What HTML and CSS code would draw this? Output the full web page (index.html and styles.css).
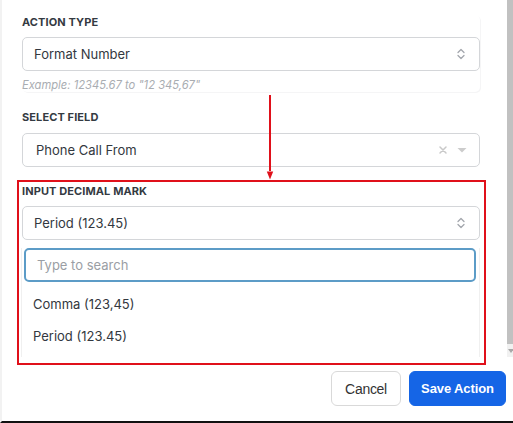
FILE: index.html
```html
<!DOCTYPE html>
<html>
<head>
<meta charset="utf-8">
<link rel="stylesheet" href="styles.css">
</head>
<body>
<div class="page">
  <div class="panel">
    <div class="field field-first">
      <div class="label">ACTION TYPE</div>
      <div class="select">
        <span class="value">Format Number</span>
        <svg class="updown" width="10" height="14" viewBox="0 0 10 14"><path d="M2 5.5 L5 2.5 L8 5.5 M2 8.5 L5 11.5 L8 8.5" fill="none" stroke="#a3a7ad" stroke-width="1.3" stroke-linecap="round" stroke-linejoin="round"/></svg>
      </div>
      <div class="hint">Example: 12345.67 to "12 345,67"</div>
    </div>
    <div class="field field-second">
      <div class="label">SELECT FIELD</div>
      <div class="select">
        <span class="value value-indent">Phone Call From</span>
        <span class="icons">
          <svg width="10" height="10" viewBox="0 0 10 10"><path d="M2 2 L8 8 M8 2 L2 8" stroke="#c9c9c9" stroke-width="1.5" stroke-linecap="round"/></svg>
          <svg width="10" height="10" viewBox="0 0 10 10"><path d="M0.5 3 L9.5 3 L5 7.5 Z" fill="#cccccc"/></svg>
        </span>
      </div>
    </div>
    <div class="field field-third">
      <div class="label">INPUT DECIMAL MARK</div>
      <div class="select">
        <span class="value">Period (123.45)</span>
        <svg class="updown" width="10" height="14" viewBox="0 0 10 14"><path d="M2 5.5 L5 2.5 L8 5.5 M2 8.5 L5 11.5 L8 8.5" fill="none" stroke="#a3a7ad" stroke-width="1.3" stroke-linecap="round" stroke-linejoin="round"/></svg>
      </div>
      <div class="menu">
        <div class="search">Type to search</div>
        <div class="option option-first">Comma (123,45)</div>
        <div class="option">Period (123.45)</div>
      </div>
    </div>
    <div class="actions">
      <button class="btn btn-cancel">Cancel</button>
      <button class="btn btn-save">Save Action</button>
    </div>
    <div class="annot-box"></div>
    <div class="annot-arrow">
      <div class="annot-line"></div>
      <svg class="annot-head" width="10" height="10" viewBox="0 0 10 10"><path d="M1 0 L9 0 L5 10 Z" fill="#e0101a"/></svg>
    </div>
  </div>
  <div class="scrollbar">
    <div class="thumb"></div>
    <div class="sb-arrow">
      <svg width="8" height="6" viewBox="0 0 8 6"><path d="M1 1 L7 1 L4 5 Z" fill="#a8a8a8"/></svg>
    </div>
  </div>
</div>
</body>
</html>
```
FILE: styles.css
```css
html, body {
  margin: 0;
  padding: 0;
  background: #ffffff;
}
body {
  width: 513px;
  height: 423px;
  overflow: hidden;
  font-family: Inter, "Noto Sans", sans-serif;
  color: #333840;
}
.page {
  display: flex;
  height: 423px;
  border-bottom: 2px solid #111111;
  border-left: 2px solid #f2f2f2;
  box-sizing: border-box;
  width: 513px;
}
.panel {
  position: relative;
  width: 501px;
  padding-left: 20px;
  display: flex;
  flex-direction: column;
}
.field {
  width: 458px;
  display: flex;
  flex-direction: column;
  border-radius: 5px;
}
.field-first {
  margin-top: 15px;
  box-shadow: 1px 1px 0 0 #f5f5f6;
}
.field-second {
  margin-top: 18px;
}
.field-third {
  margin-top: 17px;
}
.label {
  font-size: 11px;
  line-height: 14px;
  font-weight: 700;
  color: #343a42;
  letter-spacing: 0.1px;
}
.select {
  margin-top: 8px;
  height: 34px;
  border: 1px solid #d4d6d9;
  border-radius: 5px;
  box-sizing: border-box;
  display: flex;
  align-items: center;
  justify-content: space-between;
  padding: 0 13px 0 11px;
}
.field-second .select {
  margin-top: 9px;
}
.value {
  font-size: 13px;
  color: #333840;
}
.value-indent {
  padding-left: 2px;
}
.updown {
  display: block;
}
.icons {
  display: flex;
  align-items: center;
  gap: 9px;
  margin-right: -1px;
}
.icons svg {
  display: block;
}
.hint {
  margin-top: 7px;
  font-size: 11.2px;
  line-height: 14px;
  font-style: italic;
  color: #a9adb2;
}
.menu {
  margin-top: 8px;
  display: flex;
  flex-direction: column;
  border-right: 1px solid #f0f0f0;
  border-left: 1px solid #f0f0f0;
  margin-left: -1px;
  padding-bottom: 5px;
}
.search {
  margin: 0 3px 0 2px;
  height: 34px;
  border: 2px solid #5c9cc7;
  border-radius: 5px;
  box-sizing: border-box;
  display: flex;
  align-items: center;
  padding-left: 11px;
  font-size: 13px;
  color: #9a9ea4;
}
.option {
  height: 32px;
  display: flex;
  align-items: center;
  padding-left: 11px;
  font-size: 13px;
  color: #333840;
}
.option-first {
  margin-top: 6px;
}
.actions {
  margin-top: 14px;
  display: flex;
  justify-content: flex-end;
  gap: 8px;
  width: 484px;
}
.btn {
  height: 35px;
  border-radius: 6px;
  font-family: "Liberation Sans", Arial, sans-serif;
  font-size: 14px;
  box-sizing: border-box;
  padding: 0;
}
.btn-cancel {
  width: 70px;
  background: #ffffff;
  border: 1px solid #d9d9d9;
  color: #333333;
  letter-spacing: -0.3px;
}
.btn-save {
  width: 97px;
  background: #1565e6;
  border: 1px solid #1565e6;
  color: #ffffff;
  font-weight: 700;
  font-size: 13px;
  letter-spacing: -0.1px;
}
.annot-box {
  position: absolute;
  left: 15px;
  top: 180px;
  width: 469px;
  height: 185px;
  border: 2px solid #e0101a;
  box-sizing: border-box;
  pointer-events: none;
}
.annot-arrow {
  position: absolute;
  left: 263px;
  top: 95px;
  width: 10px;
  height: 85px;
  display: flex;
  flex-direction: column;
  align-items: center;
}
.annot-line {
  width: 1.5px;
  height: 76px;
  background: #e0101a;
}
.annot-head {
  display: block;
  width: 8px;
  height: 9px;
}
.scrollbar {
  width: 10px;
  height: 357px;
  background: #f1f1f1;
  display: flex;
  flex-direction: column;
  margin-left: 1px;
}
.thumb {
  height: 344px;
  background: #c1c1c1;
}
.sb-arrow {
  height: 13px;
  display: flex;
  justify-content: center;
  align-items: center;
}
.sb-arrow svg {
  display: block;
}
```
